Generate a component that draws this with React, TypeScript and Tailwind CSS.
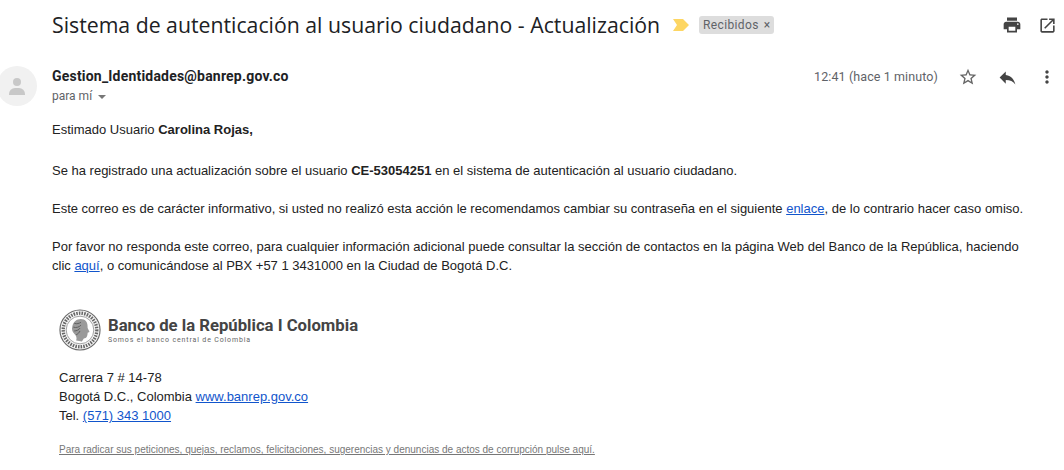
function Coin() {
  return (
    <svg width="42" height="42" viewBox="0 0 44 44" className="shrink-0">
      <circle cx="22" cy="22" r="21" fill="#f4f4f4" stroke="#6a6a6a" strokeWidth="1.2" />
      <circle cx="22" cy="22" r="14.5" fill="#fff" stroke="#888" strokeWidth="0.8" />
      <circle cx="22" cy="22" r="17.6" fill="none" stroke="#666" strokeWidth="3.5" strokeDasharray="1.6 1.2" />
      <path d="M14 18c1-6 7-9 12-7 4 2 4 6 4 9l2 4-2 1c0 3-1 6-4 6l-2 3-6-1c1-3 0-5-2-7-2-2-3-5-2-8z" fill="#9a9a9a" />
      <path d="M16 15c3 1 5 0 7-1M15 19c3 1 6 0 8-2M16 23c2 0 5-1 6-3M18 27c2-1 3-2 4-4" stroke="#555" strokeWidth="0.9" fill="none" />
    </svg>
  );
}

function Icon({ d, size, fill }: { d: string; size: number; fill: string }) {
  return (
    <svg width={size} height={size} viewBox="0 0 24 24" className="shrink-0" fill={fill}>
      <path d={d} />
    </svg>
  );
}

const PRINT = "M19 8H5c-1.66 0-3 1.34-3 3v6h4v4h12v-4h4v-6c0-1.66-1.34-3-3-3zm-3 11H8v-5h8v5zm3-7c-.55 0-1-.45-1-1s.45-1 1-1 1 .45 1 1-.45 1-1 1zm-1-9H6v4h12V3z";
const OPEN = "M19 19H5V5h7V3H5c-1.11 0-2 .9-2 2v14c0 1.1.89 2 2 2h14c1.1 0 2-.9 2-2v-7h-2v7zM14 3v2h3.59l-9.83 9.83 1.41 1.41L19 6.41V10h2V3h-7z";
const STAR = "M22 9.24l-7.19-.62L12 2 9.19 8.63 2 9.24l5.46 4.73L5.82 21 12 17.27 18.18 21l-1.63-7.03L22 9.24zM12 15.4l-3.76 2.27 1-4.28-3.32-2.88 4.38-.38L12 6.1l1.71 4.04 4.38.38-3.32 2.88 1 4.28L12 15.4z";
const REPLY = "M10 9V5l-7 7 7 7v-4.1c5 0 8.5 1.6 11 5.1-1-5-4-10-11-11z";
const MORE = "M12 8c1.1 0 2-.9 2-2s-.9-2-2-2-2 .9-2 2 .9 2 2 2zm0 2c-1.1 0-2 .9-2 2s.9 2 2 2 2-.9 2-2-.9-2-2-2zm0 6c-1.1 0-2 .9-2 2s.9 2 2 2 2-.9 2-2-.9-2-2-2z";

export default function App() {
  return (
    <div className="w-[1064px] h-[470px] overflow-hidden bg-white text-[#222] font-['Liberation_Sans',sans-serif]">
      <div className="flex items-center h-[50px] pl-[52px] pr-[7px]">
        <h1 className="font-['Open_Sans',sans-serif] text-[21.25px] font-normal text-[#202124] whitespace-nowrap">
          Sistema de autenticación al usuario ciudadano - Actualización
        </h1>
        <svg width="16" height="12" viewBox="0 0 16 12" className="ml-[13px] shrink-0">
          <path d="M0 0h10l6 6-6 6H0l4-6z" fill="#fdd663" />
        </svg>
        <span className="ml-[10px] flex items-center gap-[5px] h-[18px] px-[4px] rounded-[3px] bg-[#dddddd] text-[#5f6368] text-[12px] tracking-[0.35px] font-['Roboto',sans-serif]">
          Recibidos <span className="text-[12px] leading-none">×</span>
        </span>
        <div className="ml-auto flex items-center gap-[16px]">
          <Icon d={PRINT} size={20} fill="#444" />
          <Icon d={OPEN} size={19} fill="#444" />
        </div>
      </div>

      <div className="flex items-start h-[70px] pt-[16px]">
        <div className="w-[52px] shrink-0">
          <div className="w-[40px] h-[40px] -ml-[3px] rounded-full bg-[#f1f1f1] flex flex-col items-center justify-center">
            <div className="w-[8px] h-[8px] rounded-full bg-[#c8c8c8]" />
            <div className="w-[16px] h-[7px] mt-[2px] rounded-t-[6px] bg-[#c8c8c8]" />
          </div>
        </div>
        <div className="flex-1">
          <div className="font-['Roboto',sans-serif] text-[14px] tracking-[0.2px] font-bold text-[#202124] leading-[20px]">Gestion_Identidades@banrep.gov.co</div>
          <div className="flex items-center font-['Roboto',sans-serif] text-[12px] text-[#5f6368] leading-[20px]">
            para mí
            <svg width="8" height="4" viewBox="0 0 8 4" className="ml-[6px] mt-[2px]"><path d="M0 0h8L4 4z" fill="#777" /></svg>
          </div>
        </div>
        <div className="flex items-center h-[22px] pr-[7px] text-[#5f6368]">
          <span className="font-['Roboto',sans-serif] text-[12.5px] tracking-[0.1px] mr-[20px]">12:41 (hace 1 minuto)</span>
          <Icon d={STAR} size={20} fill="#666" />
          <div className="ml-[19px]"><Icon d={REPLY} size={21} fill="#444" /></div>
          <div className="ml-[19px]"><Icon d={MORE} size={20} fill="#444" /></div>
        </div>
      </div>

      <div className="pl-[52px] font-['Liberation_Sans',sans-serif] text-[13px] leading-[19px] text-[#222]">
        <p className="mb-[22px]">Estimado Usuario <b>Carolina Rojas,</b></p>
        <p className="mb-[19px]">Se ha registrado una actualización sobre el usuario <b>CE-53054251</b> en el sistema de autenticación al usuario ciudadano.</p>
        <p className="mb-[19px]">Este correo es de carácter informativo, si usted no realizó esta acción le recomendamos cambiar su contraseña en el siguiente <a className="text-[#1155cc] underline">enlace</a>, de lo contrario hacer caso omiso.</p>
        <p>Por favor no responda este correo, para cualquier información adicional puede consultar la sección de contactos en la página Web del Banco de la República, haciendo<br />clic <a className="text-[#1155cc] underline">aquí</a>, o comunicándose al PBX +57 1 3431000 en la Ciudad de Bogotá D.C.</p>
      </div>

      <div className="pl-[59px] pt-[27px]">
        <div className="flex items-center h-[56px]">
          <Coin />
          <div className="ml-[7px] font-['Roboto',sans-serif] text-[#444]">
            <div className="text-[16.7px] font-bold leading-[20px]">Banco de la República I Colombia</div>
            <div className="text-[7px] tracking-[0.85px] text-[#666] leading-[8px]">Somos el banco central de Colombia</div>
          </div>
        </div>
        <div className="mt-[10px] font-['Liberation_Sans',sans-serif] text-[13px] leading-[19px] text-[#222]">
          <div>Carrera 7 # 14-78</div>
          <div>Bogotá D.C., Colombia <a className="text-[#1155cc] underline">www.banrep.gov.co</a></div>
          <div>Tel. <a className="text-[#1155cc] underline">(571) 343 1000</a></div>
        </div>
        <div className="mt-[19px] text-[10px] text-[#777] underline leading-[12px]">
          Para radicar sus peticiones, quejas, reclamos, felicitaciones, sugerencias y denuncias de actos de corrupción pulse aquí.
        </div>
      </div>
    </div>
  );
}
